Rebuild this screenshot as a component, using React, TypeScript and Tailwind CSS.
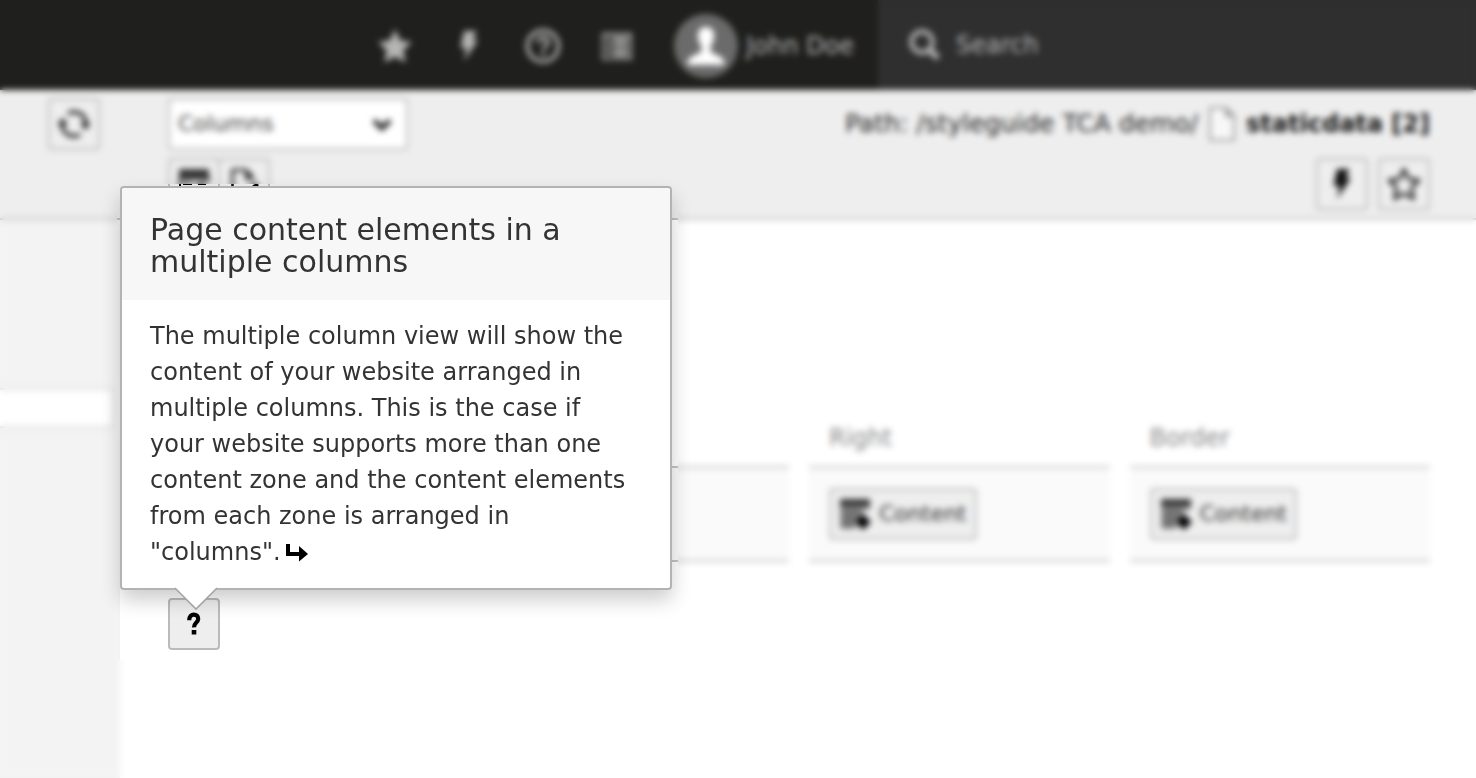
import type { ReactNode } from "react";

function Star({ outline = false }: { outline?: boolean }) {
  return (
    <svg viewBox="0 0 32 32" className={outline ? "size-8" : "size-9"} aria-hidden="true">
      <path
        d="M16 1 L20.6 11 L31 12.4 L23.4 19.8 L25.4 30.6 L16 25.6 L6.6 30.6 L8.6 19.8 L1 12.4 L11.4 11 Z"
        fill={outline ? "none" : "currentColor"}
        stroke="currentColor"
        strokeWidth={outline ? 2.8 : 0}
      />
    </svg>
  );
}

function Bolt() {
  return (
    <svg viewBox="0 0 32 32" className="size-8" aria-hidden="true">
      <path d="M11 1 H23.5 L20 10 H25 L11 31 L13.5 18 H7.5 Z" fill="currentColor" />
    </svg>
  );
}

function HelpCircle() {
  return (
    <svg viewBox="0 0 36 36" className="size-9" aria-hidden="true" fill="none" stroke="currentColor">
      <circle cx="18" cy="18" r="15.5" strokeWidth="3.6" />
      <path d="M12.8 14.5 C13 7.5 23.5 8 23.2 14 C23 17.6 18.5 17.6 18.3 21.5" strokeWidth="3.6" />
      <path d="M18.3 24 V28" strokeWidth="3.8" />
    </svg>
  );
}

function ListBox() {
  return (
    <svg viewBox="0 0 32 32" className="size-8" aria-hidden="true" fill="currentColor">
      <path fillRule="evenodd" d="M1 3 H31 V30 H1 Z M3 6 V28 H29 V6 Z" />
      <path d="M6 9 H10 V13 H6 Z M6 15 H10 V19 H6 Z M6 21 H10 V25 H6 Z M12 8 H27 V13 H12 Z M12 15 H27 V19 H12 Z M12 21 H27 V26 H12 Z" />
    </svg>
  );
}

function Person() {
  return (
    <svg viewBox="0 0 64 64" className="size-16" aria-hidden="true">
      <circle cx="32" cy="32" r="32" fill="#6b6b6b" />
      <path
        d="M32 13 C38 13 40.5 17 40 23 C39.6 28 38 30 36.5 32 V37 C37 40 50 41 50.5 49 V51 H13.5 V49 C14 41 27 40 27.5 37 V32 C26 30 24.4 28 24 23 C23.5 17 26 13 32 13 Z"
        fill="#fff"
      />
    </svg>
  );
}

function Magnifier() {
  return (
    <svg viewBox="0 0 32 32" className="size-8" aria-hidden="true" fill="none" stroke="currentColor">
      <circle cx="14" cy="13" r="10.5" strokeWidth="4.4" />
      <path d="M21 20.5 L30 29" strokeWidth="6" />
    </svg>
  );
}

function Refresh() {
  return (
    <svg viewBox="0 0 32 32" className="size-8" aria-hidden="true">
      <path d="M10 5.5 A12 12 0 0 1 28 15 M22 26.5 A12 12 0 0 1 4 17" fill="none" stroke="currentColor" strokeWidth="3.2" />
      <path d="M22 15 H32.5 L27.5 22 Z M-0.5 17 H10 L4.5 10 Z" fill="currentColor" />
    </svg>
  );
}

function ViewPage() {
  return (
    <svg viewBox="0 0 32 32" className="size-8" aria-hidden="true">
      <path d="M1 1 H31 V12 H1 Z" fill="#333" />
      <path d="M2 10 V30 H12 M31 10 V14" fill="none" stroke="#000" strokeWidth="2" />
      <path d="M5 16 H14 M20 16 H28" stroke="#000" strokeWidth="2" />
      <circle cx="22" cy="25" r="5.5" fill="none" stroke="#000" strokeWidth="3" />
    </svg>
  );
}

function EditPage() {
  return (
    <svg viewBox="0 0 32 32" className="size-8" aria-hidden="true">
      <path d="M4.5 30 V2 H18 L24 8" fill="none" stroke="#111" strokeWidth="2.6" />
      <path d="M17 1 L28 12 H17 Z" fill="#333" />
      <path d="M14 31 L15 27 L24 18 L28 15 L31 17 L20 29 Z" fill="#000" />
    </svg>
  );
}

function NewContent() {
  return (
    <svg viewBox="0 0 32 32" className="size-8" aria-hidden="true">
      <path d="M1 1 H31 V12 H24 V18 L17 24 V31 H1 Z" fill="#888" />
      <path d="M1 1 H31 V8 H1 Z" fill="#333" />
      <path d="M4 13 H22 M4 18 H17 M4 23 H15 M4 27 H13" stroke="#555" strokeWidth="2" />
      <path d="M24 16 L32 24 L24 32 L16 24 Z" fill="#000" />
    </svg>
  );
}

function PageIcon() {
  return (
    <svg viewBox="0 0 32 36" className="h-9 w-8" aria-hidden="true">
      <path d="M4 2 H20 L28 10 V34 H4 Z" fill="#f7f7f7" stroke="#999" strokeWidth="2" />
      <path d="M20 2 V10 H28 Z" fill="#bbb" stroke="#999" strokeWidth="2" />
    </svg>
  );
}

function MoreArrow() {
  return (
    <svg viewBox="0 0 24 20" className="ml-1 inline h-5 w-6 align-[-3px]" aria-hidden="true">
      <path d="M1 1 H5 V9 H14 V3 L23 11 L14 18.5 V13 H1 Z" fill="#000" />
    </svg>
  );
}

const square =
  "flex size-[52px] items-center justify-center rounded border-2 border-[#bbb] bg-[#eee] text-[#111]";

function TopIcon({ label, children }: { label: string; children: ReactNode }) {
  return (
    <button type="button" aria-label={label} className="flex w-[74px] items-center justify-center">
      {children}
    </button>
  );
}

function Column({ title }: { title?: string }) {
  return (
    <section>
      <h2 className="h-9 px-5 leading-9 text-[#888]">{title}</h2>
      <div className="mt-2.5 h-24 border-y-2 border-[#c3c3c3] bg-[#fafafa] px-5 py-5">
        {title && (
          <button
            type="button"
            className="flex h-[52px] items-center gap-2 rounded border-2 border-[#bbb] bg-[#eee] px-2 text-[22px] text-[#333]"
          >
            <NewContent />
            Content
          </button>
        )}
      </div>
    </section>
  );
}

function Popover() {
  return (
    <div
      role="tooltip"
      className="absolute bottom-full -left-12 mb-2 w-[552px] rounded border-2 border-[#b3b3b3] bg-white text-[#333] shadow-[0_10px_20px_rgba(0,0,0,0.2)]"
    >
      <h3 className="rounded-t-sm bg-[#f7f7f7] px-7 pt-[26px] pb-[22px] text-[30px] leading-8">
        Page content elements in a multiple columns
      </h3>
      <p className="py-[18px] pr-9 pl-7 leading-9">
        The multiple column view will show the content of your website arranged in multiple columns. This is the case
        if your website supports more than one content zone and the content elements from each zone is arranged in
        "columns".
        <MoreArrow />
      </p>
      <svg viewBox="0 0 44 24" className="absolute top-full left-[52px] -mt-px h-6 w-11" aria-hidden="true">
        <path d="M0 0 H44 L22 22 Z" fill="#fff" />
        <path d="M1 1 L22 22 L43 1" fill="none" stroke="#a5a5a5" strokeWidth="1.6" />
      </svg>
    </div>
  );
}

export default function App() {
  return (
    <div className="relative flex min-h-screen flex-col overflow-hidden bg-white font-['DejaVu_Sans',Verdana,sans-serif] text-2xl">
      <header className="flex h-[90px] bg-[#1f1f1d] text-[#b5b5b5]">
        <div className="flex flex-1 items-center justify-end pt-0.5 pr-6">
          <TopIcon label="Bookmarks">
            <Star />
          </TopIcon>
          <TopIcon label="Clear cache">
            <Bolt />
          </TopIcon>
          <TopIcon label="Help">
            <HelpCircle />
          </TopIcon>
          <TopIcon label="System information">
            <ListBox />
          </TopIcon>
          <button type="button" className="ml-5 flex items-center gap-2 whitespace-nowrap">
            <Person />
            John Doe
          </button>
        </div>
        <label className="flex w-[598px] items-center gap-4 bg-[#2f2f2f] pl-[30px]">
          <Magnifier />
          <input
            type="search"
            aria-label="Search"
            placeholder="Search"
            className="min-w-0 flex-1 bg-transparent placeholder:text-[#b5b5b5]"
          />
        </label>
      </header>

      <div className="flex flex-1">
        <aside className="flex w-[120px] shrink-0 flex-col bg-[#f3f3f3]">
          <div className="flex h-[130px] justify-end border-b-2 border-[#c3c3c3] bg-[#eee] px-5 pt-2">
            <button type="button" aria-label="Refresh" className={square}>
              <Refresh />
            </button>
          </div>
          <div className="mt-[168px] mr-1.5 h-10 border-2 border-l-0 border-[#ddd] bg-white" />
        </aside>

        <main className="min-w-0 flex-1">
          <div className="flex h-[130px] justify-between border-b-2 border-[#c3c3c3] bg-[#eee] pt-2 pr-[46px] pl-12">
            <div className="flex flex-col gap-2">
              <div className="relative w-60">
                <select
                  aria-label="View"
                  className="h-[52px] w-full appearance-none rounded border-2 border-[#bbb] bg-white pl-2 text-[22px] text-[#444]"
                >
                  <option>Columns</option>
                </select>
                <svg
                  viewBox="0 0 20 14"
                  className="pointer-events-none absolute top-5 right-4 h-3.5 w-5"
                  aria-hidden="true"
                >
                  <path d="M2 2.5 L10 10 L18 2.5" fill="none" stroke="#222" strokeWidth="5" />
                </svg>
              </div>
              <div className="flex">
                <button type="button" aria-label="View page" className={square}>
                  <ViewPage />
                </button>
                <button type="button" aria-label="Edit page" className={`${square} -ml-0.5`}>
                  <EditPage />
                </button>
              </div>
            </div>
            <div className="flex flex-col items-end gap-2">
              <p className="flex h-[52px] items-center whitespace-nowrap text-[#222]">
                <span className="text-[25px]">Path: /styleguide TCA demo/</span>
                <span className="mx-2">
                  <PageIcon />
                </span>
                <strong className="text-[#111]">staticdata [2]</strong>
              </p>
              <div className="flex gap-2.5">
                <button type="button" aria-label="Clear page cache" className={square}>
                  <Bolt />
                </button>
                <button type="button" aria-label="Add bookmark" className={square}>
                  <Star outline />
                </button>
              </div>
            </div>
          </div>

          <div className="pt-[200px] pr-[46px] pl-12">
            <div className="grid grid-cols-4 gap-5">
              <Column />
              <Column />
              <Column title="Right" />
              <Column title="Border" />
            </div>
            <div className="relative z-20 mt-9 w-[52px]">
              <button type="button" aria-label="Help for this view" className={square}>
                <svg viewBox="0 0 16 24" className="h-6 w-4" aria-hidden="true">
                  <path
                    d="M3.2 8.2 C3.2 0.6 12.4 1.2 12.2 7 C12 10.6 7.8 11 8 15.4"
                    fill="none"
                    stroke="#000"
                    strokeWidth="4.2"
                  />
                  <path d="M5.7 18 H10.3 V22.5 H5.7 Z" fill="#000" />
                </svg>
              </button>
              <Popover />
            </div>
          </div>
        </main>
      </div>

      <div className="pointer-events-none absolute inset-0 z-10 backdrop-blur-[3px] [clip-path:polygon(evenodd,0_0,100%_0,100%_100%,0_100%,0_0,117px_184px,678px_184px,678px_660px,117px_660px,117px_184px,0_0)]" />
    </div>
  );
}
